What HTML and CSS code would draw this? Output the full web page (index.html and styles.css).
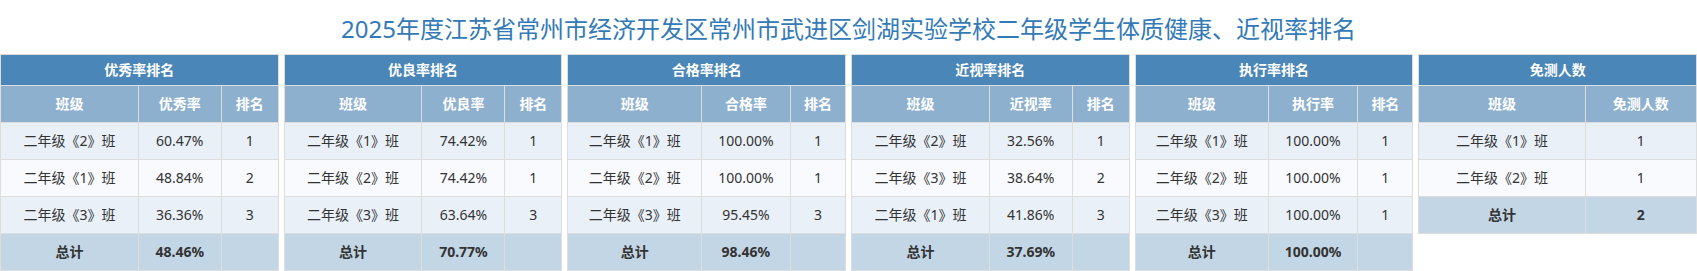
FILE: index.html
```html
<!DOCTYPE html>
<html lang="zh-CN">
<head>
<meta charset="utf-8">
<title>体质健康排名</title>
<link rel="stylesheet" href="styles.css">
</head>
<body>
<h1 class="title">2025年度江苏省常州市经济开发区常州市武进区剑湖实验学校二年级学生体质健康、近视率排名</h1>
<div class="grid">
  <table class="rank">
    <tr class="cap"><th colspan="3">优秀率排名</th></tr>
    <tr class="sub"><th>班级</th><th>优秀率</th><th>排名</th></tr>
    <tr class="odd"><td>二年级《2》班</td><td>60.47%</td><td>1</td></tr>
    <tr class="even"><td>二年级《1》班</td><td>48.84%</td><td>2</td></tr>
    <tr class="odd"><td>二年级《3》班</td><td>36.36%</td><td>3</td></tr>
    <tr class="total"><td>总计</td><td>48.46%</td><td></td></tr>
  </table>
  <table class="rank">
    <tr class="cap"><th colspan="3">优良率排名</th></tr>
    <tr class="sub"><th>班级</th><th>优良率</th><th>排名</th></tr>
    <tr class="odd"><td>二年级《1》班</td><td>74.42%</td><td>1</td></tr>
    <tr class="even"><td>二年级《2》班</td><td>74.42%</td><td>1</td></tr>
    <tr class="odd"><td>二年级《3》班</td><td>63.64%</td><td>3</td></tr>
    <tr class="total"><td>总计</td><td>70.77%</td><td></td></tr>
  </table>
  <table class="rank">
    <tr class="cap"><th colspan="3">合格率排名</th></tr>
    <tr class="sub"><th>班级</th><th>合格率</th><th>排名</th></tr>
    <tr class="odd"><td>二年级《1》班</td><td>100.00%</td><td>1</td></tr>
    <tr class="even"><td>二年级《2》班</td><td>100.00%</td><td>1</td></tr>
    <tr class="odd"><td>二年级《3》班</td><td>95.45%</td><td>3</td></tr>
    <tr class="total"><td>总计</td><td>98.46%</td><td></td></tr>
  </table>
  <table class="rank">
    <tr class="cap"><th colspan="3">近视率排名</th></tr>
    <tr class="sub"><th>班级</th><th>近视率</th><th>排名</th></tr>
    <tr class="odd"><td>二年级《2》班</td><td>32.56%</td><td>1</td></tr>
    <tr class="even"><td>二年级《3》班</td><td>38.64%</td><td>2</td></tr>
    <tr class="odd"><td>二年级《1》班</td><td>41.86%</td><td>3</td></tr>
    <tr class="total"><td>总计</td><td>37.69%</td><td></td></tr>
  </table>
  <table class="rank">
    <tr class="cap"><th colspan="3">执行率排名</th></tr>
    <tr class="sub"><th>班级</th><th>执行率</th><th>排名</th></tr>
    <tr class="odd"><td>二年级《1》班</td><td>100.00%</td><td>1</td></tr>
    <tr class="even"><td>二年级《2》班</td><td>100.00%</td><td>1</td></tr>
    <tr class="odd"><td>二年级《3》班</td><td>100.00%</td><td>1</td></tr>
    <tr class="total"><td>总计</td><td>100.00%</td><td></td></tr>
  </table>
  <table class="rank">
    <tr class="cap"><th colspan="2">免测人数</th></tr>
    <tr class="sub"><th>班级</th><th>免测人数</th></tr>
    <tr class="odd"><td>二年级《1》班</td><td>1</td></tr>
    <tr class="even"><td>二年级《2》班</td><td>1</td></tr>
    <tr class="total"><td>总计</td><td>2</td></tr>
  </table>
</div>
</body>
</html>
```

FILE: styles.css
```css
html, body {
  margin: 0;
  padding: 0;
  background: #ffffff;
}
body {
  font-family: "Noto Sans", "Noto Sans CJK SC", sans-serif;
  color: #333333;
}
.title {
  margin: 0 0 8px 0;
  padding-top: 12px;
  height: 34px;
  line-height: 34px;
  font-size: 24px;
  font-weight: normal;
  text-align: center;
  color: #337ab7;
  white-space: nowrap;
}
.grid {
  display: grid;
  grid-template-columns: repeat(6, 1fr);
  column-gap: 5px;
  align-items: start;
}
.rank {
  width: 100%;
  border-collapse: collapse;
  border: 1px solid #dddddd;
  font-size: 14px;
  text-align: center;
}
.rank th,
.rank td {
  border: 1px solid #dddddd;
  padding: 0 8px;
  line-height: 20px;
  white-space: nowrap;
}
.cap th {
  height: 30px;
  background: #4a86b8;
  color: #ffffff;
  font-weight: bold;
  font-size: 14px;
}
.sub th {
  height: 36px;
  background: #8eb0cf;
  color: #ffffff;
  font-weight: bold;
  font-size: 14px;
}
.rank td {
  height: 36px;
}
.odd td {
  background: #e9f0f8;
}
.even td {
  background: #f8fafe;
}
.total td {
  background: #c3d6e5;
  font-weight: bold;
}
```
